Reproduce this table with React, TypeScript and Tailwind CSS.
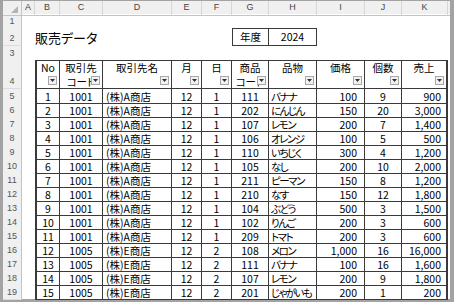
import React from "react";

// 販売データ sheet (Excel-like view)
const cols = "grid grid-cols-[19px_13px_25px_43px_69px_30px_30px_37px_48px_48px_37px_46px_2px]";
const letters = ["A", "B", "C", "D", "E", "F", "G", "H", "I", "J", "K"];

type Row = [number, string, string, number, number, number, string, string, number, string];

const rows: Row[] = [
    [1, "1001", "(株)A商店", 12, 1, 111, "バナナ", "100", 9, "900"],
    [2, "1001", "(株)A商店", 12, 1, 202, "にんじん", "150", 20, "3,000"],
    [3, "1001", "(株)A商店", 12, 1, 107, "レモン", "200", 7, "1,400"],
    [4, "1001", "(株)A商店", 12, 1, 106, "オレンジ", "100", 5, "500"],
    [5, "1001", "(株)A商店", 12, 1, 110, "いちじく", "300", 4, "1,200"],
    [6, "1001", "(株)A商店", 12, 1, 105, "なし", "200", 10, "2,000"],
    [7, "1001", "(株)A商店", 12, 1, 211, "ピーマン", "150", 8, "1,200"],
    [8, "1001", "(株)A商店", 12, 1, 210, "なす", "150", 12, "1,800"],
    [9, "1001", "(株)A商店", 12, 1, 104, "ぶどう", "500", 3, "1,500"],
    [10, "1001", "(株)A商店", 12, 1, 102, "りんご", "200", 3, "600"],
    [11, "1001", "(株)A商店", 12, 1, 209, "トマト", "200", 3, "600"],
    [12, "1005", "(株)E商店", 12, 2, 108, "メロン", "1,000", 16, "16,000"],
    [13, "1005", "(株)E商店", 12, 2, 111, "バナナ", "100", 16, "1,600"],
    [14, "1005", "(株)E商店", 12, 2, 107, "レモン", "200", 9, "1,800"],
    [15, "1005", "(株)E商店", 12, 2, 201, "じゃがいも", "200", 1, "200"],
];

const headers: string[][] = [
    ["No"], ["取引先", "コード"], ["取引先名"], ["月"], ["日"], ["商品", "コード"], ["品物"], ["価格"], ["個数"], ["売上"],
];

const RowNum = ({ n }: { n: number }) => (
    <div className="bg-[#f0f0f0] border-r border-b border-r-[#c4c4c4] border-b-[#dcdcdc] flex items-end justify-center text-[9px] leading-[14px] text-[#555] font-['Liberation_Sans',sans-serif]">
        {n}
    </div>
);

const FilterButton = () => (
    <span className="absolute right-[2px] bottom-[3px] w-[9px] h-[9px] bg-[#f2f2f2] border border-[#a8a8a8] flex items-center justify-center">
        <svg width="5" height="3" viewBox="0 0 5 3"><path d="M0 0h5L2.5 3z" fill="#333" /></svg>
    </span>
);

const cell = "border-r border-b border-[#3a3a3a] text-[10.5px] leading-[13px] flex items-center whitespace-nowrap overflow-hidden";

export default function App() {
    return (
        <div className="w-[454px] h-[302px] bg-[#a3a3a3] pl-[3px] pr-[4px] pt-[1px] pb-[3px] font-['Noto_Sans_CJK_JP',sans-serif] [font-feature-settings:'palt'] text-black">
            <div className="bg-white h-full flex flex-col">
                {/* column letters */}
                <div className={`${cols} h-[13px] bg-[#f0f0f0]`}>
                    <div className="relative border-r border-b border-[#c4c4c4]">
                        <svg className="absolute right-[3px] bottom-[2px]" width="7" height="7" viewBox="0 0 7 7"><path d="M7 0v7H0z" fill="#b5b5b5" /></svg>
                    </div>
                    {letters.map((l) => (
                        <div key={l} className="border-r border-b border-r-[#d6d6d6] border-b-[#c4c4c4] flex items-center justify-center text-[9px] text-[#444] font-['Liberation_Sans',sans-serif]">
                            {l}
                        </div>
                    ))}
                    <div className="border-b border-[#c4c4c4]" />
                </div>

                {/* row 1 */}
                <div className={`${cols} h-[14px]`}>
                    <RowNum n={1} />
                </div>

                {/* row 2: title + year */}
                <div className={`${cols} h-[18px]`}>
                    <RowNum n={2} />
                    <div />
                    <div className="flex items-end pb-[1px] text-[13px] leading-[15px] whitespace-nowrap overflow-visible">販売データ</div>
                    <div /><div /><div /><div />
                    <div className="border border-[#3a3a3a] flex items-center justify-center text-[10.5px]">年度</div>
                    <div className="border-t border-r border-b border-[#3a3a3a] flex items-center justify-center text-[10.5px]">2024</div>
                </div>

                {/* row 3 */}
                <div className={`${cols} h-[14px]`}>
                    <RowNum n={3} />
                </div>

                {/* row 4: table header */}
                <div className={`${cols} h-[29px]`}>
                    <RowNum n={4} />
                    <div />
                    {headers.map((lines, i) => (
                        <div
                            key={i}
                            className={`relative border-r border-b border-t border-[#3a3a3a] text-[10.5px] leading-[14px] flex flex-col items-center whitespace-nowrap overflow-hidden ${i === 0 ? "border-l-2" : ""} ${i === 9 ? "border-r-2" : ""}`}
                        >
                            {lines.map((t) => <span key={t}>{t}</span>)}
                            <FilterButton />
                        </div>
                    ))}
                </div>

                {/* data rows */}
                {rows.map((r, idx) => (
                    <div key={idx} className={`${cols} h-[14px]`}>
                        <RowNum n={idx + 5} />
                        <div />
                        <div className={`${cell} border-l-2 justify-center`}>{r[0]}</div>
                        <div className={`${cell} justify-center`}>{r[1]}</div>
                        <div className={`${cell} pl-[3px]`}>{r[2]}</div>
                        <div className={`${cell} justify-center`}>{r[3]}</div>
                        <div className={`${cell} justify-center`}>{r[4]}</div>
                        <div className={`${cell} justify-center`}>{r[5]}</div>
                        <div className={`${cell} pl-[2px] tracking-[-1.5px]`}>{r[6]}</div>
                        <div className={`${cell} justify-end pr-[7px]`}>{r[7]}</div>
                        <div className={`${cell} justify-center`}>{r[8]}</div>
                        <div className={`${cell} justify-end pr-[5px] border-r-2`}>{r[9]}</div>
                    </div>
                ))}
            </div>
        </div>
    );
}
